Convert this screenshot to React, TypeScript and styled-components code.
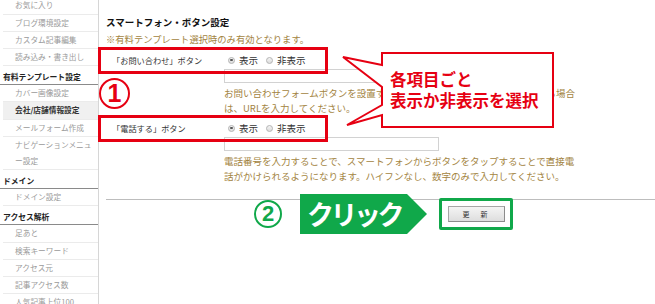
import React from "react";
import styled, { createGlobalStyle } from "styled-components";

const RED = "#e60012";
const GREEN = "#10a84a";
const GOLD = "#a3843f";

const GlobalStyle = createGlobalStyle`
  html, body {
    margin: 0;
    padding: 0;
    background: #fff;
  }
  body {
    width: 655px;
    height: 304px;
    overflow: hidden;
    font-family: "Noto Sans CJK JP", "Noto Sans", sans-serif;
  }
`;

const Page = styled.div`
  position: relative;
  display: flex;
  width: 655px;
  height: 304px;
  overflow: hidden;
`;

const Sidebar = styled.nav`
  width: 98px;
  flex: none;
  border-right: 1px solid #d6d6d6;
`;

const NavList = styled.div`
  margin-top: -2.6px;
`;

const NavItem = styled.div<{ $active?: boolean }>`
  margin-left: 3px;
  padding-left: 12px;
  font-size: 7.7px;
  line-height: 16.2px;
  color: ${(p) => (p.$active ? "#333" : "#9a9a9a")};
  font-weight: ${(p) => (p.$active ? 700 : 400)};
  background: ${(p) => (p.$active ? "#f0f0f0" : "transparent")};
  border-bottom: 1px solid #ebebeb;
  white-space: nowrap;
`;

const NavHeading = styled.div`
  padding: 5px 0 1px 3px;
  font-size: 7.8px;
  line-height: 12px;
  font-weight: 700;
  color: #222;
  border-bottom: 1.5px solid #8a8a8a;
`;

const Main = styled.main`
  flex: 1;
  padding: 15px 0 0 7px;
`;

const Title = styled.h2`
  margin: 0;
  font-size: 9.5px;
  line-height: 14px;
  font-weight: 700;
  color: #111;
`;

const Note = styled.p`
  margin: 3px 0 0;
  font-size: 9.3px;
  line-height: 14px;
  color: ${GOLD};
`;

const Field = styled.div`
  position: relative;
  display: grid;
  grid-template-columns: 112px 1fr;
  margin: 5px 0 0 6px;
  & + & {
    margin-top: 3px;
  }
`;

const Highlight = styled.div`
  position: absolute;
  top: -4px;
  left: -14px;
  width: 230px;
  height: 26.5px;
  box-sizing: border-box;
  border: 3px solid ${RED};
  z-index: 1;
`;

const Label = styled.div`
  font-size: 8.2px;
  line-height: 18px;
  color: #333;
`;

const Value = styled.div`
  display: flex;
  flex-direction: column;
`;

const Radios = styled.div`
  display: flex;
  align-items: center;
  height: 18px;
  padding-left: 4px;
`;

const RadioOption = styled.label`
  display: flex;
  align-items: center;
  gap: 4px;
  margin-right: 8px;
  font-size: 9.5px;
  color: #333;
`;

const RadioDot = styled.span<{ $checked?: boolean }>`
  position: relative;
  width: 7px;
  height: 7px;
  box-sizing: border-box;
  border-radius: 50%;
  border: 1px solid #b4b4b4;
  background: linear-gradient(#f4f4f4, #dcdcdc);
  &::after {
    content: "";
    display: ${(p) => (p.$checked ? "block" : "none")};
    position: absolute;
    inset: 1.2px;
    border-radius: 50%;
    background: #555;
  }
`;

const TextInput = styled.input`
  display: block;
  width: 215px;
  height: 14px;
  box-sizing: border-box;
  margin: 0;
  padding: 0 3px;
  border: 1px solid #d2d2d2;
  background: #fff;
  outline: none;
`;

const Help = styled.p`
  margin: 3px 0 0;
  width: 356px;
  font-size: 9.5px;
  line-height: 15px;
  color: ${GOLD};
`;

const Divider = styled.hr`
  margin: 15px 0 0;
  border: 0;
  border-top: 1px solid #bdbdbd;
`;

const ClickRow = styled.div`
  display: flex;
  align-items: center;
  margin: -6px 0 0 148px;
  height: 40px;
`;

const StepCircle = styled.div<{ $color: string; $size: number }>`
  width: ${(p) => p.$size}px;
  height: ${(p) => p.$size}px;
  box-sizing: border-box;
  border: 2.5px solid ${(p) => p.$color};
  border-radius: 50%;
  display: flex;
  align-items: center;
  justify-content: center;
  color: ${(p) => p.$color};
  font-family: "Liberation Sans", "Noto Sans", sans-serif;
  font-size: ${(p) => Math.round(p.$size * 0.8)}px;
  font-weight: 700;
  line-height: 1;
  background: #fff;
`;

const StepOne = styled.div`
  position: absolute;
  left: 99px;
  top: 78px;
  z-index: 2;
`;

const Banner = styled.div`
  margin-left: 18px;
  width: 127px;
  height: 40px;
  background: ${GREEN};
  clip-path: polygon(0 0, 107px 0, 127px 50%, 107px 100%, 0 100%);
  color: #fff;
  font-size: 27px;
  font-weight: 700;
  line-height: 40px;
  letter-spacing: -3.5px;
  padding-left: 7px;
  box-sizing: border-box;
`;

const ButtonBox = styled.div`
  margin-left: 12px;
  width: 74px;
  height: 32px;
  box-sizing: border-box;
  border: 3.5px solid ${GREEN};
  border-radius: 2px;
  display: flex;
  align-items: center;
  justify-content: center;
  background: #fff;
`;

const UpdateButton = styled.button`
  width: 57px;
  height: 16px;
  padding: 0;
  border: 1px solid #a6a6a6;
  border-right-color: #8c8c8c;
  border-bottom-color: #8c8c8c;
  background: linear-gradient(#f4f4f4, #dedede);
  font-family: "Noto Sans CJK JP", sans-serif;
  font-size: 7px;
  letter-spacing: 2px;
  color: #333;
`;

const Callout = styled.div`
  position: absolute;
  left: 340px;
  top: 50px;
  width: 216px;
  height: 80px;
  z-index: 3;
`;

const CalloutShape = styled.svg`
  position: absolute;
  inset: 0;
`;

const CalloutText = styled.div`
  position: relative;
  padding: 18.5px 0 0 50px;
  font-size: 16.5px;
  line-height: 21px;
  font-weight: 700;
  color: ${RED};
  white-space: nowrap;
`;

const navTop = ["お気に入り", "ブログ環境設定", "カスタム記事編集", "読み込み・書き出し"];
const access = ["足あと", "検索キーワード", "アクセス元", "記事アクセス数", "人気記事上位100"];

const Radio = ({ label, checked }: { label: string; checked?: boolean }) => (
  <RadioOption>
    <RadioDot $checked={checked} />
    {label}
  </RadioOption>
);

export default function App() {
  return (
    <>
      <GlobalStyle />
      <Page>
        <Sidebar>
          <NavList>
            {navTop.map((t) => (
              <NavItem key={t}>{t}</NavItem>
            ))}
            <NavHeading>有料テンプレート設定</NavHeading>
            <NavItem>カバー画像設定</NavItem>
            <NavItem $active>会社/店舗情報設定</NavItem>
            <NavItem>メールフォーム作成</NavItem>
            <NavItem>
              ナビゲーションメニュ
              <br />
              ー設定
            </NavItem>
            <NavHeading>ドメイン</NavHeading>
            <NavItem>ドメイン設定</NavItem>
            <NavHeading>アクセス解析</NavHeading>
            {access.map((t) => (
              <NavItem key={t}>{t}</NavItem>
            ))}
          </NavList>
        </Sidebar>

        <Main>
          <Title>スマートフォン・ボタン設定</Title>
          <Note>※有料テンプレート選択時のみ有効となります。</Note>

          <Field>
            <Highlight />
            <Label>「お問い合わせ」ボタン</Label>
            <Value>
              <Radios>
                <Radio label="表示" checked />
                <Radio label="非表示" />
              </Radios>
              <TextInput readOnly />
              <Help>
                お問い合わせフォームボタンを設置する際、独自のお問い合わせページがある場合は、URLを入力してください。
              </Help>
            </Value>
          </Field>

          <Field>
            <Highlight />
            <Label>「電話する」ボタン</Label>
            <Value>
              <Radios>
                <Radio label="表示" checked />
                <Radio label="非表示" />
              </Radios>
              <TextInput readOnly />
              <Help>
                電話番号を入力することで、スマートフォンからボタンをタップすることで直接電話がかけられるようになります。ハイフンなし、数字のみで入力してください。
              </Help>
            </Value>
          </Field>

          <Divider />

          <ClickRow>
            <StepCircle $color={GREEN} $size={28}>2</StepCircle>
            <Banner>クリック</Banner>
            <ButtonBox>
              <UpdateButton>更　新</UpdateButton>
            </ButtonBox>
          </ClickRow>
        </Main>

        <StepOne>
          <StepCircle $color={RED} $size={31}>1</StepCircle>
        </StepOne>

        <Callout>
          <CalloutShape width="216" height="80" viewBox="0 0 216 80">
            <path
              d="M42 3 H213 V77 H42 V65 L7 75 L42 55 V37 L3 7 L42 15 Z"
              fill="#fff"
              stroke={RED}
              strokeWidth="2"
            />
          </CalloutShape>
          <CalloutText>
            各項目ごと
            <br />
            表示か非表示を選択
          </CalloutText>
        </Callout>
      </Page>
    </>
  );
}
